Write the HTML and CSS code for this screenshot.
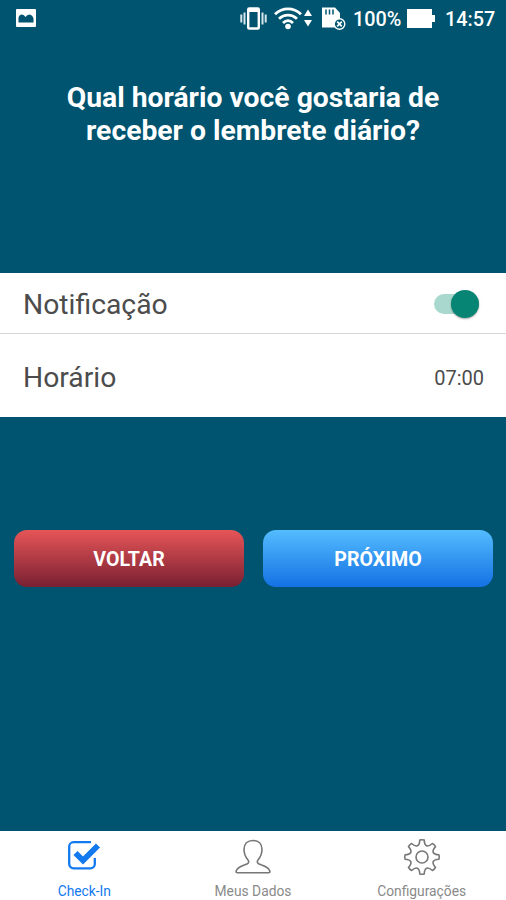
FILE: index.html
```
<!DOCTYPE html>
<html lang="pt-BR">

<head>
    <meta charset="UTF-8">
    <meta name="viewport" content="width=device-width, initial-scale=1.0">
    <title>Lembrete diário</title>
    <link rel="stylesheet" href="styles.css">
</head>

<body>
    <div class="status-bar">
        <svg class="picture-icon" width="20" height="18" viewBox="0 0 20 18">
            <rect width="20" height="18" rx="1" fill="#fff"/>
            <path d="M2.5 13.500V8.500Q3.500 5.500 6 5.500 8 5.500 9.500 8 11 5.500 13.500 5.500 16.500 6 17.500 9.500v4z" fill="#00546f"/>
        </svg>
        <svg class="vibrate-icon" width="27" height="24" viewBox="0 0 27 24">
            <path d="M1.300 8.500v8M4.500 6.500v12M22.500 6.500v12M25.700 8.500v8" stroke="#d5e6ec" stroke-width="2"/>
            <rect x="8.200" y="2.500" width="10.600" height="20" rx="1" fill="none" stroke="#fff" stroke-width="2.400"/>
            <path d="M8 4.500h11" stroke="#fff" stroke-width="3"/>
        </svg>
        <svg class="wifi-icon" width="38" height="24" viewBox="0 0 38 24">
            <g fill="none" stroke="#fff" stroke-width="2.800">
                <path d="M1 8.300c7.500-7.200 18.500-7.200 26 0"/>
                <path d="M5 12.800c5.300-5 12.700-5 18 0"/>
                <path d="M9 17c3-3 7-3 10 0"/>
            </g>
            <circle cx="14" cy="20.500" r="2.800" fill="#fff"/>
            <path d="M34 3.500l4 6.500h-8zM34 20.500l4-6.500h-8z" fill="#fff"/>
        </svg>
        <svg class="card-icon" width="25" height="24" viewBox="0 0 25 24">
            <path d="M1 1.500h13l5 5.500V21.500H1z" fill="#fff"/>
            <path d="M5 3.500v5M8.500 3.500v5M12 3.500v5" stroke="#00546f" stroke-width="1.500"/>
            <circle cx="18.500" cy="18" r="5.300" fill="#00546f" stroke="#fff" stroke-width="1.400"/>
            <path d="M16.200 15.700l4.600 4.600M20.800 15.700l-4.600 4.600" stroke="#fff" stroke-width="1.700"/>
        </svg>
        <span class="battery-level">100%</span>
        <svg class="battery-icon" width="28" height="19" viewBox="0 0 28 19">
            <path d="M0 0h25v6h3v7h-3v6H0z" fill="#fff"/>
        </svg>
        <span class="clock">14:57</span>
    </div>

    <h1 class="title">Qual horário você gostaria de<br>receber o lembrete diário?</h1>

    <div class="options">
        <div class="option notification">
            <span>Notificação</span>
            <span class="toggle" id="toggle"></span>
        </div>
        <div class="option time">
            <span>Horário</span>
            <span class="time-value">07:00</span>
        </div>
    </div>

    <div class="buttons">
        <button type="button" class="btn btn-back">VOLTAR</button>
        <button type="button" class="btn btn-next">PRÓXIMO</button>
    </div>

    <div class="tab-bar">
        <div class="tab active">
            <svg width="38" height="38" viewBox="0 0 38 38" fill="none">
                <path d="M26 4.200H8.500a4.300 4.300 0 0 0-4.300 4.300v17.500a4.300 4.300 0 0 0 4.300 4.300h17a4.300 4.300 0 0 0 4.300-4.300v-6" stroke="#1379ee" stroke-width="2.300"/>
                <path d="M10.500 15l7.500 7.500L33 7.500" stroke="#1379ee" stroke-width="5.800"/>
            </svg>
            <span>Check-In</span>
        </div>
        <div class="tab">
            <svg width="38" height="38" viewBox="0 0 38 38" fill="none" stroke="#777" stroke-width="1.600" stroke-linejoin="round">
                <path d="M19 2.500c-5.500 0-9 3.500-9 9 0 4.500 1.500 7.500 4 10.500 1.200 1.600.8 3.200-1 4-4.500 2-9.500 2.500-10.800 7-.3 1.200.2 1.800 1.300 1.800h31c1.100 0 1.600-.6 1.300-1.800-1.300-4.500-6.300-5-10.800-7-1.800-.8-2.200-2.400-1-4 2.500-3 4-6 4-10.500 0-5.500-3.500-9-9-9z"/>
            </svg>
            <span>Meus Dados</span>
        </div>
        <div class="tab">
            <svg width="38" height="38" viewBox="-19 -19 38 38" fill="none" stroke="#777" stroke-width="1.600" stroke-linejoin="round">
                <path d="M-2.200-16.900Q0-17.700 2.200-16.900C2.600-10.500 5.590-9.260 10.390-13.500Q12.500-12.500 13.500-10.390C9.260-5.590 10.500-2.600 16.900-2.200Q17.700 0 16.900 2.200C10.500 2.600 9.260 5.590 13.500 10.390Q12.500 12.500 10.390 13.500C5.590 9.260 2.600 10.500 2.200 16.900Q0 17.700-2.200 16.900C-2.600 10.500-5.590 9.260-10.390 13.500Q-12.500 12.500-13.500 10.390C-9.260 5.590-10.500 2.600-16.900 2.200Q-17.700 0-16.900-2.200C-10.500-2.600-9.260-5.590-13.500-10.390Q-12.500-12.500-10.390-13.500C-5.590-9.260-2.600-10.500-2.200-16.900z"/>
                <circle r="6"/>
            </svg>
            <span>Configurações</span>
        </div>
    </div>

    <script>
        document.getElementById('toggle').addEventListener('click', function () {
            this.classList.toggle('off');
        });
    </script>
</body>

</html>
```
FILE: styles.css
```
body {
    font-family: Roboto, sans-serif;
    background-color: #00546f;
    margin: 0;
    height: 900px;
    display: flex;
    flex-direction: column;
    overflow: hidden;
}

.status-bar {
    height: 36px;
    padding: 0 11px 0 16px;
    display: flex;
    align-items: center;
    color: #fff;
    font-size: 20px;
    font-weight: 500;
}

.picture-icon {
    margin-right: auto;
}

.wifi-icon {
    margin-left: 7px;
}

.card-icon {
    margin-left: 9px;
}

.battery-level {
    width: 48px;
    margin-left: 7px;
    padding-top: 2px;
    font-size: 19.8px;
    white-space: nowrap;
}

.battery-icon {
    margin-left: 6px;
}

.clock {
    width: 50px;
    margin-left: 10px;
    padding-top: 2px;
    font-size: 19.8px;
}

.title {
    height: 192px;
    margin: 45px 0 0;
    color: #fff;
    font-size: 28.3px;
    line-height: 33px;
    text-align: center;
}

.options {
    background-color: #fff;
    color: #4c4c4c;
    font-size: 28.3px;
}

.option {
    display: flex;
    align-items: center;
    justify-content: space-between;
    box-sizing: border-box;
    padding: 0 22px 0 23px;
}

.notification {
    height: 61px;
    border-bottom: 1px solid #d8d8d8;
    padding-top: 2px;
    padding-right: 27px;
}

.time {
    height: 83px;
    padding-top: 4px;
}

.time-value {
    font-size: 20px;
}

.toggle {
    width: 45px;
    height: 20px;
    border-radius: 10px;
    background-color: #a9d9ce;
    display: flex;
    align-items: center;
    justify-content: flex-end;
}

.toggle::after {
    content: "";
    width: 28px;
    height: 28px;
    border-radius: 50%;
    background-color: #078574;
    box-shadow: 0 1px 2px rgba(0, 0, 0, 0.35);
}

.toggle.off {
    justify-content: flex-start;
}

.buttons {
    display: flex;
    gap: 19px;
    padding: 113px 13px 0 14px;
}

.btn {
    flex: 1;
    height: 57px;
    border: none;
    border-radius: 13px;
    padding-top: 3px;
    color: #fff;
    font-family: inherit;
    font-size: 19.6px;
    font-weight: bold;
    cursor: pointer;
}

.btn-back {
    background: linear-gradient(#e65557, #792032);
}

.btn-next {
    background: linear-gradient(#54bcff, #1471e3);
}

.tab-bar {
    height: 69px;
    margin-top: auto;
    background-color: #fff;
    display: flex;
}

.tab {
    flex: 1;
    display: flex;
    flex-direction: column;
    align-items: center;
    padding-top: 7px;
    color: #8a8a8a;
    font-size: 13.8px;
}

.tab span {
    margin-top: 6px;
    line-height: 18px;
}

.tab.active {
    color: #1379ee;
}
```
